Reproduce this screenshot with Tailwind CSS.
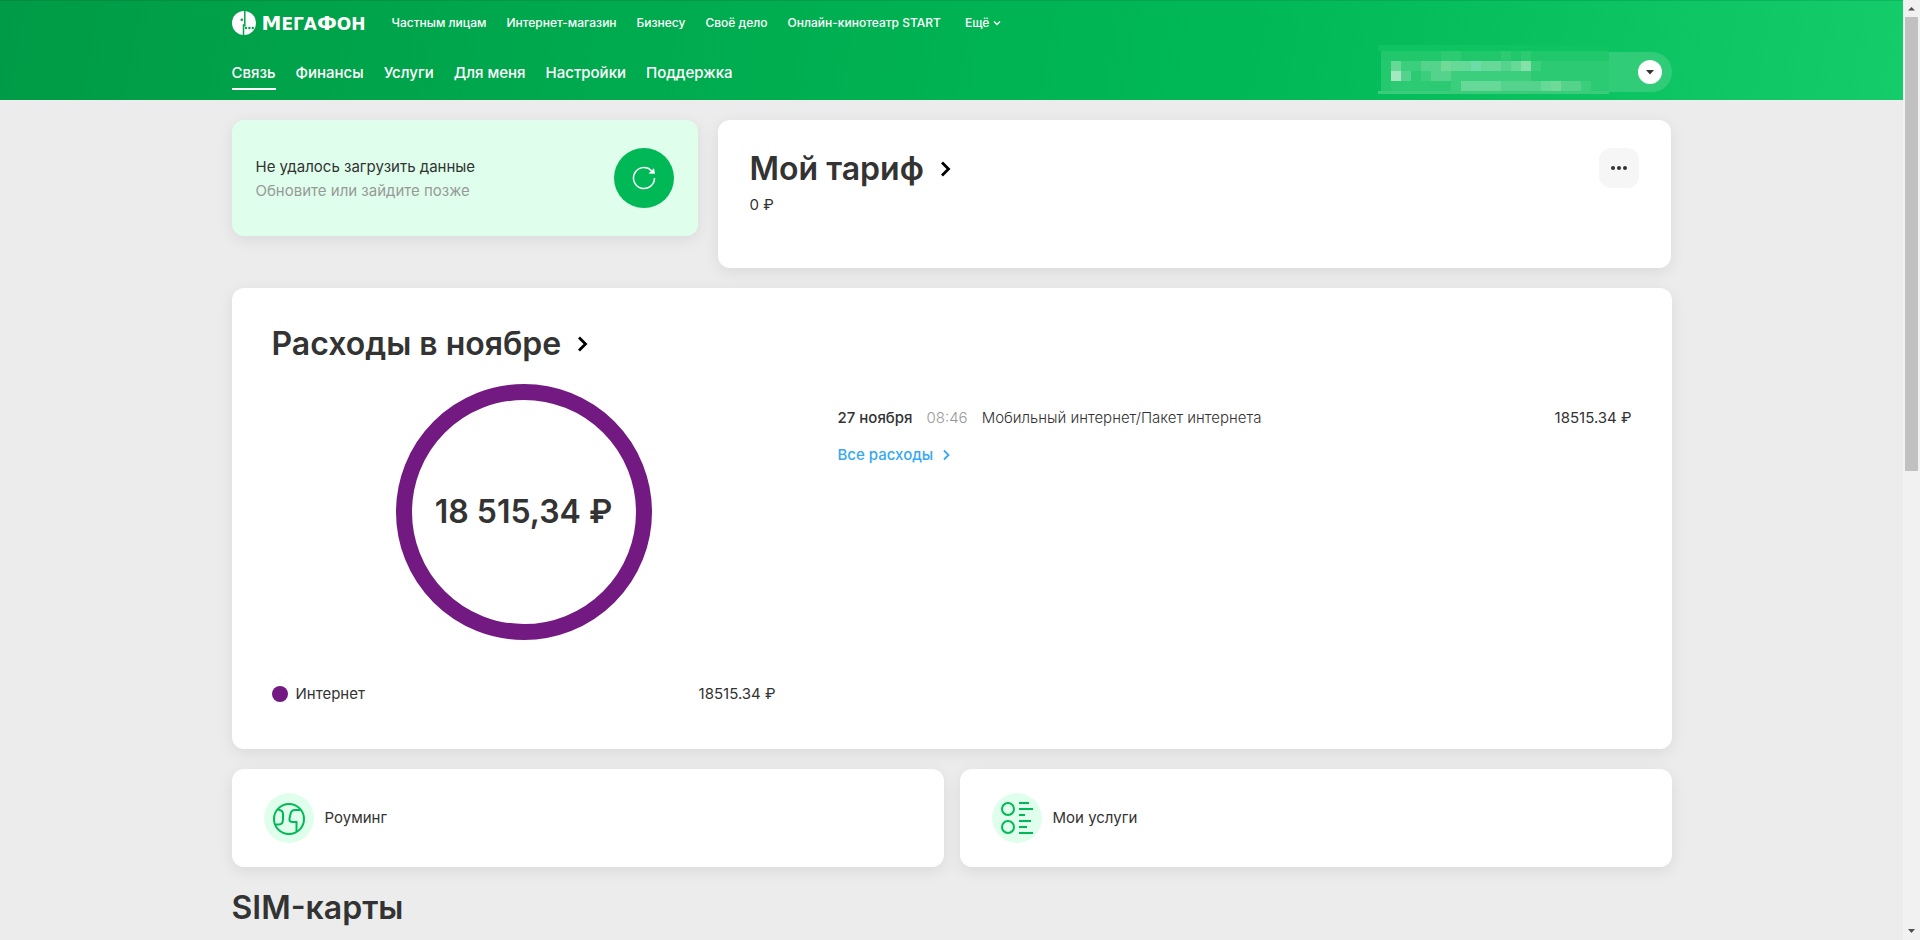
<!DOCTYPE html>
<html lang="ru">
<head>
<meta charset="utf-8">
<meta name="viewport" content="width=device-width, initial-scale=1">
<title>МегаФон — личный кабинет</title>
<script src="https://cdn.jsdelivr.net/npm/@tailwindcss/browser@4"></script>
</head>
<body class="flex h-screen overflow-hidden bg-[#ececec] font-['Inter','Liberation_Sans',sans-serif] text-[15px] leading-6 text-[#333]">
<div class="h-full min-w-0 flex-1 overflow-hidden">
  <header class="border-t border-black/10 bg-[linear-gradient(100deg,#009b46_0%,#00b956_65%,#14cc6a_100%)] text-white">
    <div class="mx-auto flex h-[99px] max-w-[1440px] flex-col">
      <div class="flex h-11 items-center text-[12px] leading-4 font-medium">
        <a href="#" class="flex w-40 items-center gap-1.5" aria-label="МегаФон">
          <svg class="size-6 shrink-0" viewBox="0 0 24 24"><circle cx="12" cy="12" r="12" fill="#fff"/><path d="M12.800 0V14H11.500V24" fill="none" stroke="#00a44b" stroke-width="1.500"/><path d="M11.500 14.800h2" stroke="#00a44b" stroke-width="1.200"/><circle cx="9.800" cy="8.700" r="1.300" fill="#00a44b"/><g fill="#00a44b"><circle cx="14" cy="17" r="1.200"/><circle cx="17.400" cy="17" r="1.200"/><circle cx="20.800" cy="17" r="1.200"/></g></svg>
          <span class="font-['DejaVu_Sans',sans-serif] text-[20px] leading-6 font-bold">М<span class="text-[17px]">ЕГА</span>Ф<span class="text-[17px]">ОН</span></span>
        </a>
        <nav class="flex items-center gap-5 whitespace-nowrap" aria-label="Разделы сайта">
          <a href="#">Частным лицам</a><a href="#">Интернет-магазин</a><a href="#">Бизнесу</a><a href="#">Своё дело</a><a href="#">Онлайн-кинотеатр START</a>
          <button type="button" class="ml-1 flex items-center gap-1">Ещё<svg class="size-2" viewBox="0 0 8 8" fill="none" stroke="#fff" stroke-width="1.400"><path d="M1 2.500l3 3 3-3"/></svg></button>
        </nav>
      </div>
      <div class="flex flex-1 items-start justify-between">
        <nav class="flex gap-5 pt-4 font-medium whitespace-nowrap" aria-label="Личный кабинет">
          <a href="#" class="border-b-2 border-white pb-[3px]" aria-current="page">Связь</a><a href="#">Финансы</a><a href="#">Услуги</a><a href="#">Для меня</a><a href="#">Настройки</a><a href="#">Поддержка</a>
        </nav>
        <button type="button" class="block" aria-label="Выбор номера">
          <svg width="294" height="49" viewBox="0 0 294 49">
            <path d="M231 7h43a20 20 0 0 1 0 40h-43z" fill="#30cc77"/>
            <path d="M0 0h231v6H0z" fill="#0ec460"/><path d="M3 6h228v10H3z" fill="#21c86b"/><path d="M3 16h228v30H3z" fill="#2bca73"/><path d="M0 46h231v3H0z" fill="#3acc7b"/>
            <path d="M3 16h10v30H3z" fill="#24c86d"/>
            <g fill="#3ace7d"><path d="M23 16h20v10H23zM153 16h10v10h-10zM43 26h110v10H43zM73 36h10v10H73zM203 36h10v10h-10z"/></g>
            <g fill="#66d998"><path d="M13 16h10v10H13zM73 16h70v10H73zM83 36h40v10H83zM163 36h20v10h-20z"/></g>
            <g fill="#55d38d"><path d="M23 26h10v10H23zM43 16h20v10H43zM53 26h20v10H53zM123 16h10v10h-10zM123 36h40v10h-40zM183 36h20v10h-20z"/></g>
            <path d="M63 16h10v10H63zM173 36h10v10h-10z" fill="#70db98"/><path d="M93 16h10v10H93z" fill="#6adda8"/><path d="M143 16h10v10h-10z" fill="#85e1a8"/>
            <path d="M13 26h10v10H13z" fill="#a4e8c2"/><path d="M63 6h20v10H63zM123 6h10v10h-10zM143 6h10v10h-10z" fill="#2ccb72"/>
            <circle cx="272" cy="27" r="12" fill="#fff"/><path d="M268 25h8l-4 4.500z" fill="#333"/>
          </svg>
        </button>
      </div>
    </div>
  </header>

  <main class="mx-auto max-w-[1440px] pt-5">
    <div class="flex items-start gap-5">
      <section class="flex h-[116px] w-[466px] items-center justify-between rounded-xl bg-[#dfffec] px-6 shadow-[0_4px_16px_rgba(0,0,0,0.08)]">
        <div class="pt-0.5"><p>Не удалось загрузить данные</p><p class="text-[#999]">Обновите или зайдите позже</p></div>
        <button type="button" class="flex size-15 items-center justify-center rounded-full bg-[#00b956]" aria-label="Обновить">
          <svg class="size-6" viewBox="0 0 24 24" fill="none" stroke="#fff" stroke-width="1.500"><path d="M22.500 12a10.500 10.500 0 1 1-3-7.300"/><path d="M16.500 7.500L22 2.300l1 5.500z" fill="#fff" stroke="none"/></svg>
        </button>
      </section>
      <section class="mr-px flex h-[148px] flex-1 justify-between rounded-xl bg-white px-8 pt-7 shadow-[0_4px_16px_rgba(0,0,0,0.08)]">
        <div class="pt-px">
          <h2 class="text-[32px] leading-10 font-semibold"><a href="#" class="flex items-center gap-4">Мой тариф
            <svg width="12" height="18" viewBox="0 0 12 18" fill="none" stroke="#000" stroke-width="2.800"><path d="M2 2.500L8.500 9 2 15.500"/></svg></a></h2>
          <p class="mt-1">0 ₽</p>
        </div>
        <button type="button" class="flex size-10 items-center justify-center rounded-xl bg-[#f6f6f6]" aria-label="Ещё действия">
          <svg width="16" height="4" viewBox="0 0 16 4" fill="#333"><circle cx="2" cy="2" r="2"/><circle cx="8" cy="2" r="2"/><circle cx="14" cy="2" r="2"/></svg>
        </button>
      </section>
    </div>

    <section class="mt-5 rounded-xl bg-white px-10 pt-9 pb-[43px] shadow-[0_4px_16px_rgba(0,0,0,0.08)]">
      <h2 class="text-[32px] leading-10 font-semibold"><a href="#" class="flex items-center gap-4">Расходы в ноябре
        <svg width="12" height="18" viewBox="0 0 12 18" fill="none" stroke="#000" stroke-width="2.800"><path d="M2 2.500L8.500 9 2 15.500"/></svg></a></h2>
      <div class="mt-5 flex gap-[62px]">
        <div class="w-[504px]">
          <div class="mx-auto flex size-64 items-center justify-center rounded-full border-16 border-[#731982] text-[32px] font-semibold whitespace-nowrap">18 515,34 ₽</div>
          <div class="mt-[42px] flex items-center"><span class="mr-2 size-4 rounded-full bg-[#731982]"></span>Интернет<span class="ml-auto">18515.34 ₽</span></div>
        </div>
        <div class="flex-1 pt-[22px]">
          <div class="flex gap-3.5"><span class="font-medium">27 ноября</span><span class="font-light text-[#999]">08:46</span><span class="font-light">Мобильный интернет/Пакет интернета</span><span class="ml-auto">18515.34 ₽</span></div>
          <a href="#" class="mt-[13px] inline-flex items-center gap-2 font-medium text-[#36a9f0]">Все расходы
            <svg class="size-3" viewBox="0 0 12 12" fill="none" stroke="#36a9f0" stroke-width="1.800"><path d="M3 1.500L7.500 6 3 10.500"/></svg></a>
        </div>
      </div>
    </section>

    <div class="mt-5 grid grid-cols-2 gap-4">
      <a href="#" class="flex h-[98px] items-center gap-[11px] rounded-xl bg-white px-8 shadow-[0_4px_16px_rgba(0,0,0,0.08)]">
        <svg width="50" height="50" viewBox="0 0 50 50" fill="none" stroke="#00b956" stroke-width="2"><circle cx="25" cy="25" r="25" fill="#dfffec" stroke="none"/><circle cx="25" cy="26" r="15"/><path d="M14 16.500c3 .5 5 2 5 4.500v5c0 3.500-1.500 5.500-4 5.500h-3M36.500 17H31c-3 0-4 1.500-4.500 4l-1 4.500c-.3 2.500 1 3.500 3 3.500h4v10"/></svg>Роуминг</a>
      <a href="#" class="flex h-[98px] items-center gap-[11px] rounded-xl bg-white px-8 shadow-[0_4px_16px_rgba(0,0,0,0.08)]">
        <svg width="50" height="50" viewBox="0 0 50 50" fill="none" stroke="#00b956" stroke-width="2"><circle cx="25" cy="25" r="25" fill="#dfffec" stroke="none"/><circle cx="16" cy="16" r="6"/><circle cx="16" cy="34" r="6"/><path d="M27 10h10M27 16h14M27 22h6M27 28h12M27 34h8M27 40h14"/></svg>Мои услуги</a>
    </div>
    <h2 class="mt-[21px] text-[32px] leading-10 font-semibold">SIM-карты</h2>
  </main>
</div>

<div class="flex h-full w-[17px] shrink-0 flex-col items-center bg-[#f1f1f1]" aria-hidden="true">
  <svg width="17" height="17" viewBox="0 0 17 17" fill="#505050"><path d="M5 10.500h7L8.500 7z"/></svg>
  <div class="h-[454px] w-[13px] bg-[#c1c1c1]"></div>
  <svg class="mt-auto" width="17" height="17" viewBox="0 0 17 17" fill="#505050"><path d="M5 6h7L8.500 10z"/></svg>
</div>
</body>
</html>
